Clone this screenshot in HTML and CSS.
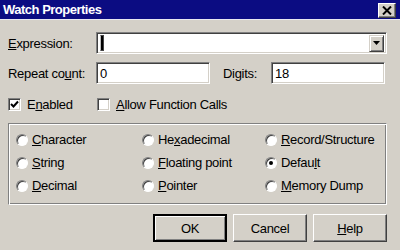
FILE: index.html
```html
<!DOCTYPE html>
<html>

<head>
  <title>Watch Properties</title>
  <meta charset="UTF-8">
  <link rel="stylesheet" href="styles.css">
</head>

<body>
  <div class="dialog">
    <header class="titlebar">
      <span class="title">Watch Properties</span>
      <button class="close">
        <svg width="10" height="9" viewBox="0 0 10 9"><path d="M1 0.5 L9 8.5 M9 0.5 L1 8.5" stroke="#000" stroke-width="2" /></svg>
      </button>
    </header>

    <div class="content">
      <div class="row row-expr">
        <label class="label"><u>E</u>xpression:</label>
        <div class="field combo">
          <span class="caret"></span>
          <span class="drop">
            <svg width="7" height="4" viewBox="0 0 7 4"><path d="M0 0 H7 L3.5 4 Z" fill="#000" /></svg>
          </span>
        </div>
      </div>

      <div class="row row-count">
        <label class="label">Repeat co<u>u</u>nt:</label>
        <div class="field short">0</div>
        <label class="label digits">Digits:</label>
        <div class="field short">18</div>
      </div>

      <div class="row row-checks">
        <label class="check check-enabled">
          <span class="box">
            <svg width="9" height="9" viewBox="0 0 9 9"><path d="M1 4 L3.5 6.5 L8 1.5" fill="none" stroke="#000" stroke-width="2" /></svg>
          </span>
          <span>E<u>n</u>abled</span>
        </label>
        <label class="check">
          <span class="box"></span>
          <span><u>A</u>llow Function Calls</span>
        </label>
      </div>

      <fieldset class="group">
        <label class="radio"><span class="dot"></span><span><u>C</u>haracter</span></label>
        <label class="radio"><span class="dot"></span><span>He<u>x</u>adecimal</span></label>
        <label class="radio"><span class="dot"></span><span><u>R</u>ecord/Structure</span></label>
        <label class="radio"><span class="dot"></span><span><u>S</u>tring</span></label>
        <label class="radio"><span class="dot"></span><span><u>F</u>loating point</span></label>
        <label class="radio"><span class="dot on"></span><span>Defau<u>l</u>t</span></label>
        <label class="radio"><span class="dot"></span><span><u>D</u>ecimal</span></label>
        <label class="radio"><span class="dot"></span><span><u>P</u>ointer</span></label>
        <label class="radio"><span class="dot"></span><span><u>M</u>emory Dump</span></label>
      </fieldset>

      <div class="buttons">
        <button class="btn default">OK</button>
        <button class="btn">Cancel</button>
        <button class="btn"><u>H</u>elp</button>
      </div>
    </div>
  </div>
</body>

</html>
```

FILE: styles.css
```css
body {
  margin: 0;
  padding: 0;
  background-color: #d4d0c8;
  font-family: "Liberation Sans", Arial, sans-serif;
  font-size: 13px;
  letter-spacing: -0.3px;
  color: #000;
}

.dialog {
  width: 400px;
  height: 250px;
  overflow: hidden;
}

.titlebar {
  height: 19px;
  background-color: #0b0c82;
  border-bottom: 1px solid #e8e8f0;
  display: flex;
  align-items: center;
  justify-content: space-between;
  padding: 0 4px 0 3px;
}

.title {
  color: #fff;
  font-weight: bold;
  font-size: 13px;
  letter-spacing: -0.5px;
}

.close {
  width: 18px;
  height: 15px;
  padding: 0;
  margin-top: 1px;
  background-color: #d4d0c8;
  border: 1px solid;
  border-color: #fff #404040 #404040 #fff;
  box-shadow: inset -1px -1px #808080;
  display: flex;
  align-items: center;
  justify-content: center;
}

.content {
  padding: 12px 13px 0 8px;
}

.row {
  display: flex;
  align-items: center;
}

.label {
  width: 88px;
  flex-shrink: 0;
  white-space: nowrap;
}

.field {
  height: 22px;
  box-sizing: border-box;
  background-color: #fff;
  border: 1px solid;
  border-color: #808080 #fff #fff #808080;
  box-shadow: inset 1px 1px #404040, inset -1px -1px #d4d0c8;
  padding: 2px 3px 0;
  line-height: 18px;
}

.combo {
  flex: 1;
  display: flex;
  justify-content: space-between;
  align-items: center;
  padding: 2px 2px 2px 3px;
}

.caret {
  width: 2px;
  height: 14px;
  background-color: #000;
  border: 1px solid #444;
  border-left-color: #bbb;
}

.drop {
  width: 15px;
  height: 17px;
  box-sizing: border-box;
  background-color: #d4d0c8;
  border: 1px solid;
  border-color: #d4d0c8 #404040 #404040 #d4d0c8;
  box-shadow: inset 1px 1px #fff, inset -1px -1px #808080;
  display: flex;
  align-items: center;
  justify-content: center;
}

.row-count {
  margin-top: 8px;
}

.short {
  width: 114px;
}

.digits {
  width: 48px;
  margin-left: 13px;
}

.row-checks {
  margin-top: 13px;
  height: 14px;
}

.check {
  display: flex;
  align-items: center;
  gap: 6px;
  white-space: nowrap;
}

.check-enabled {
  width: 89px;
}

.box {
  width: 13px;
  height: 13px;
  box-sizing: border-box;
  background-color: #fff;
  border: 1px solid;
  border-color: #808080 #fff #fff #808080;
  box-shadow: inset 1px 1px #404040, inset -1px -1px #d4d0c8;
  display: flex;
  align-items: center;
  justify-content: center;
}

.group {
  margin: 12px 0 0;
  padding: 4px 0 0 7px;
  height: 82px;
  box-sizing: border-box;
  border: 1px solid;
  border-color: #808080 #fff #fff #808080;
  box-shadow: inset 1px 1px #fff, inset -1px -1px #808080;
  display: grid;
  grid-template-columns: 126px 123px 1fr;
  grid-auto-rows: 23px;
  align-items: center;
}

.radio {
  display: flex;
  align-items: center;
  gap: 4px;
  white-space: nowrap;
}

.dot {
  width: 12px;
  height: 12px;
  flex-shrink: 0;
  box-sizing: border-box;
  border-radius: 50%;
  background-color: #fff;
  border: 1px solid;
  border-color: #808080 #fff #fff #808080;
  box-shadow: inset 1px 1px #404040;
  display: flex;
  align-items: center;
  justify-content: center;
}

.dot.on::after {
  content: "";
  width: 4px;
  height: 4px;
  border-radius: 50%;
  background-color: #000;
}

.buttons {
  display: flex;
  justify-content: flex-end;
  gap: 6px;
  margin-top: 9px;
}

.btn {
  width: 74px;
  height: 28px;
  padding: 0;
  font-family: inherit;
  font-size: 13px;
  letter-spacing: -0.3px;
  color: #000;
  background-color: #d4d0c8;
  border: 1px solid;
  border-color: #fff #404040 #404040 #fff;
  box-shadow: inset -1px -1px #808080;
}

.btn.default {
  border: 2px solid #000;
  box-shadow: inset 1px 1px #fff, inset -1px -1px #808080;
}
```
